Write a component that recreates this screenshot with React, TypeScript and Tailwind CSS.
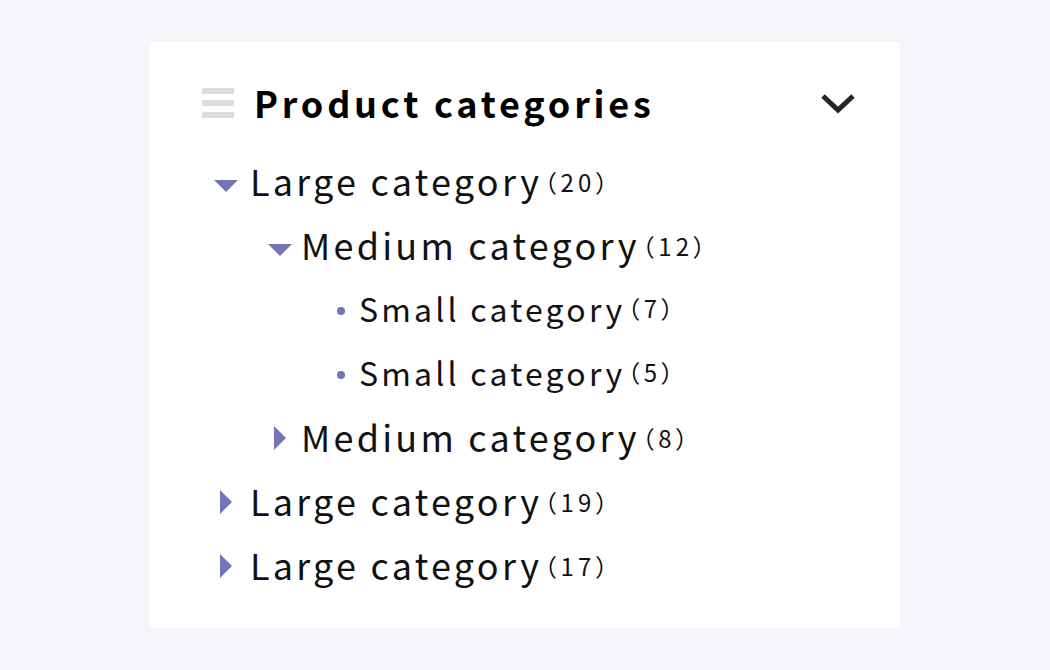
import React from 'react'

type Node = {
  label: string
  count: number
  level: 0 | 1 | 2
  state: 'open' | 'closed' | 'leaf'
}

const TREE: Node[] = [
  { label: 'Large category', count: 20, level: 0, state: 'open' },
  { label: 'Medium category', count: 12, level: 1, state: 'open' },
  { label: 'Small category', count: 7, level: 2, state: 'leaf' },
  { label: 'Small category', count: 5, level: 2, state: 'leaf' },
  { label: 'Medium category', count: 8, level: 1, state: 'closed' },
  { label: 'Large category', count: 19, level: 0, state: 'closed' },
  { label: 'Large category', count: 17, level: 0, state: 'closed' },
]

const FONT = { fontFamily: '"Noto Sans CJK JP", "Noto Sans", sans-serif' }

function Toggle({ state }: { state: Node['state'] }) {
  if (state === 'leaf') {
    return (
      <span className="w-6 h-6 flex items-center justify-center shrink-0">
        <span className="block w-2 h-2 rounded-full bg-[#7276b9]" />
      </span>
    )
  }
  return (
    <span
      className={`w-6 h-6 flex items-center justify-center shrink-0 ${state === 'open' ? 'mt-[6px]' : '-mt-[2px]'}`}
    >
      {state === 'open' ? (
        <svg width="24" height="12" viewBox="0 0 24 12">
          <polygon points="0,0 24,0 12,12" fill="#7276b9" />
        </svg>
      ) : (
        <svg width="12" height="24" viewBox="0 0 12 24">
          <polygon points="0,0 12,12 0,24" fill="#7276b9" />
        </svg>
      )}
    </span>
  )
}

function Row({ node }: { node: Node }) {
  const indent =
    node.level === 0 ? 'pl-[64px] gap-3' : node.level === 1 ? 'pl-[118px] gap-[9px]' : 'pl-[179px] gap-[6px]'
  const size = node.level === 2 ? 'text-[32px] tracking-[0.1em]' : 'text-[36px] tracking-[0.09em]'
  return (
    <li className={`h-16 flex items-center ${indent}`}>
      <Toggle state={node.state} />
      <span className={`${size} text-[#111] leading-none pb-[7px]`}>
        {node.label}
        <span className="ml-[2px] align-[4px] text-[24px] tracking-[0.18em] [font-feature-settings:'palt']">
          （{node.count}）
        </span>
      </span>
    </li>
  )
}

export default function App() {
  return (
    <div className="min-h-screen bg-[#f5f5f9] pt-[42px] pl-[150px]" style={FONT}>
      <section className="w-[750px] h-[586px] bg-white pt-[29px]">
        {/* Header */}
        <div className="h-16 flex items-center pl-[52px] pr-[44px]">
          <span className="flex flex-col gap-[6px] w-8">
            <span className="h-[6px] bg-[#dddddd]" />
            <span className="h-[6px] bg-[#dddddd]" />
            <span className="h-[6px] bg-[#dddddd]" />
          </span>
          <h2 className="ml-[20px] pb-[3px] text-[36px] font-bold tracking-[0.105em] text-black leading-none">
            Product categories
          </h2>
          <svg className="ml-auto" width="36" height="24" viewBox="0 0 36 24">
            <polyline points="3,5 18,19 33,5" fill="none" stroke="#222428" strokeWidth="5" />
          </svg>
        </div>

        {/* Tree */}
        <ul className="mt-4">
          {TREE.map((node, i) => (
            <Row key={i} node={node} />
          ))}
        </ul>
      </section>
    </div>
  )
}
